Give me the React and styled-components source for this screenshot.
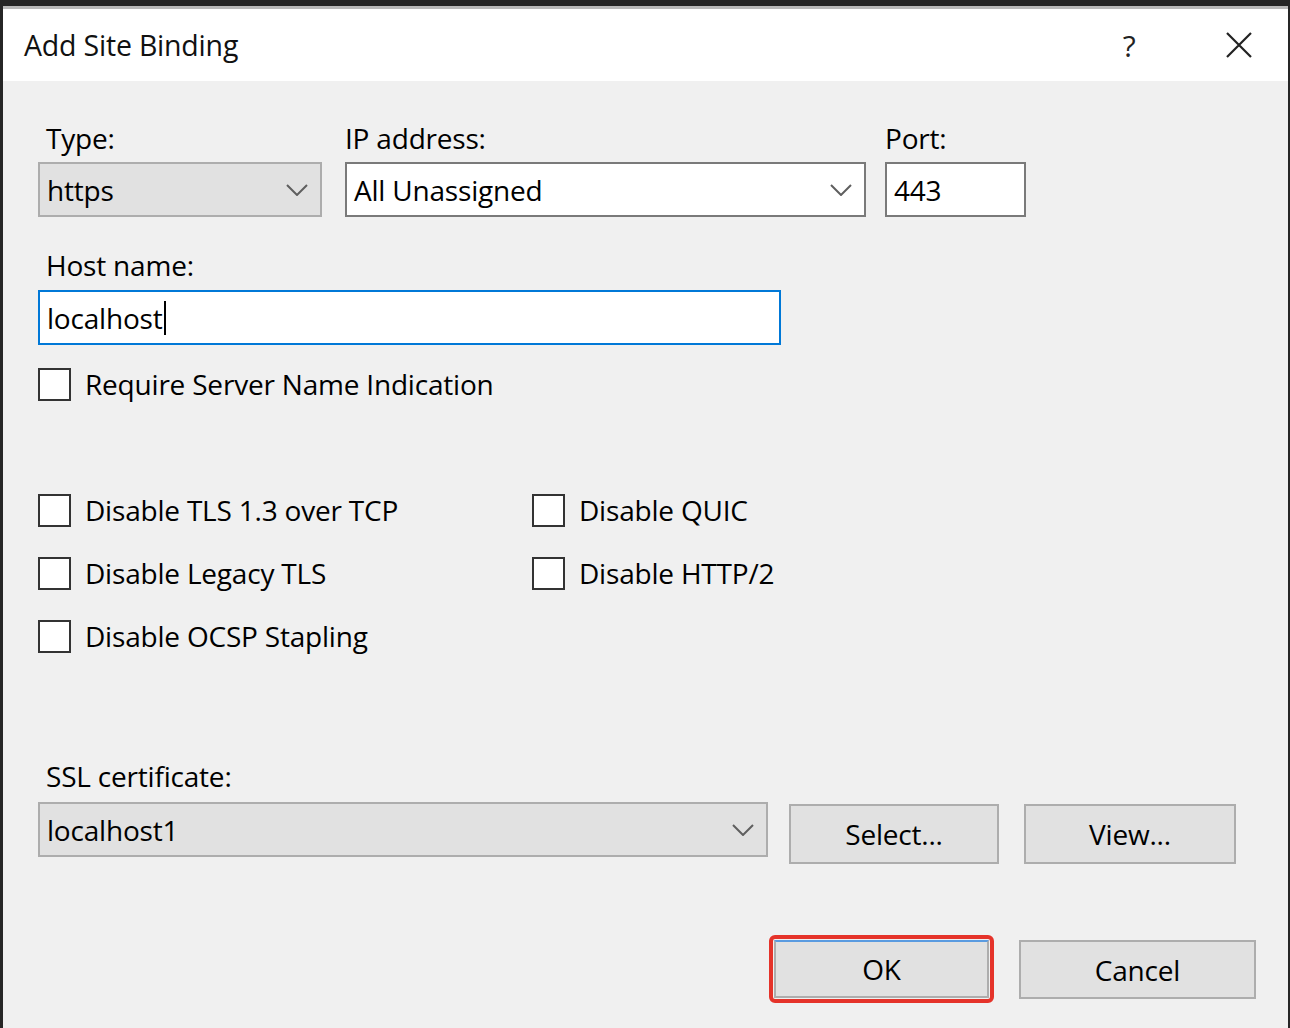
import React from 'react';
import styled, { createGlobalStyle } from 'styled-components';

const Global = createGlobalStyle`
  html, body { margin: 0; padding: 0; background: #262626; }
  body { font-family: "Open Sans", "Noto Sans", sans-serif; }
`;

const Screen = styled.div`
  width: 1290px;
  height: 1028px;
  padding: 6px 2px 0 3px;
  box-sizing: border-box;
  overflow: hidden;
`;

const Window = styled.div`
  height: 100%;
  display: flex;
  flex-direction: column;
  background: #f0f0f0;
  border-top: 3px solid #b9b9b9;
  font-size: 28px;
  letter-spacing: -0.2px;
  color: #000;
`;

const TitleBar = styled.div`
  height: 72px;
  flex: none;
  background: #fff;
  display: flex;
  align-items: center;
  padding: 0 36px 0 21px;
`;

const Title = styled.div`
  flex: 1;
  font-size: 28.5px;
  color: #111;
`;

const TitleIcon = styled.div`
  width: 26px;
  height: 28px;
  display: flex;
  align-items: center;
  justify-content: center;
  margin-left: ${p => p.gap || 0}px;
  font-size: 30px;
  color: #222;
`;

const Body = styled.div`
  flex: 1;
  display: flex;
  flex-direction: column;
  padding: 39px 32px 0 35px;
`;

const TopGrid = styled.div`
  display: flex;
  & > div:nth-child(2) { margin-left: 23px; }
  & > div:nth-child(3) { margin-left: 19px; }
`;

const Field = styled.div`
  display: flex;
  flex-direction: column;
  width: ${p => p.w ? p.w + 'px' : 'auto'};
  margin-top: ${p => p.top || 0}px;
`;

const Label = styled.div`
  height: 36px;
  line-height: 36px;
  padding-left: ${p => p.indent ?? 8}px;
  margin-bottom: ${p => p.after || 6}px;
  white-space: nowrap;
`;

const Box = styled.div`
  box-sizing: border-box;
  height: ${p => p.h || 55}px;
  width: ${p => p.w ? p.w + 'px' : '100%'};
  display: flex;
  align-items: center;
  padding: 0 12px 0 7px;
  background: ${p => (p.$gray ? '#e1e1e1' : '#fff')};
  border: 2px solid ${p => (p.$blue ? '#0078d7' : p.$gray ? '#adadad' : '#7a7a7a')};
  white-space: nowrap;
`;

const BoxText = styled.span`
  flex: 1;
  display: flex;
  align-items: center;
`;

const Caret = styled.span`
  display: inline-block;
  width: 2px;
  height: 34px;
  background: #000;
  margin-left: 1px;
`;

const Chevron = () => (
  <svg width="22" height="12" viewBox="0 0 22 12" fill="none">
    <path d="M1 1 L11 11 L21 1" stroke="#5f5f5f" strokeWidth="2" />
  </svg>
);

const CheckRow = styled.label`
  display: flex;
  align-items: center;
  height: 36px;
  white-space: nowrap;
  margin-top: ${p => p.top || 0}px;
`;

const CheckBox = styled.span`
  box-sizing: border-box;
  width: 33px;
  height: 33px;
  border: 2px solid #333;
  background: #fff;
  margin-right: 14px;
  flex: none;
`;

const OptionsGrid = styled.div`
  display: grid;
  grid-template-columns: 494px auto;
  row-gap: 27px;
  margin-top: 90px;
`;

const CertRow = styled.div`
  display: flex;
  align-items: flex-start;
`;

const Button = styled.div`
  box-sizing: border-box;
  width: ${p => p.w}px;
  height: ${p => p.h || 60}px;
  margin-left: ${p => p.gap || 0}px;
  margin-top: ${p => p.top || 0}px;
  display: flex;
  align-items: center;
  justify-content: center;
  background: #e1e1e1;
  border: 2px solid #adadad;
  border-top-color: ${p => (p.$default ? '#5a9be0' : '#adadad')};
  outline: ${p => (p.$marked ? '4px solid #e5332a' : 'none')};
  outline-offset: 1px;
  border-radius: ${p => (p.$marked ? '1px' : '0')};
`;

const Footer = styled.div`
  display: flex;
  justify-content: flex-end;
  margin-top: 76px;
`;

export default function App() {
  return (
    <Screen>
      <Global />
      <Window>
        <TitleBar>
          <Title>Add Site Binding</Title>
          <TitleIcon>?</TitleIcon>
          <TitleIcon gap={84}>
            <svg width="26" height="26" viewBox="0 0 26 26">
              <path d="M1 1 L25 25 M25 1 L1 25" stroke="#222" strokeWidth="2.2" />
            </svg>
          </TitleIcon>
        </TitleBar>
        <Body>
          <TopGrid>
            <Field w={284}>
              <Label>Type:</Label>
              <Box $gray>
                <BoxText>https</BoxText>
                <Chevron />
              </Box>
            </Field>
            <Field w={521}>
              <Label indent={0}>IP address:</Label>
              <Box>
                <BoxText>All Unassigned</BoxText>
                <Chevron />
              </Box>
            </Field>
            <Field w={141}>
              <Label indent={0}>Port:</Label>
              <Box>
                <BoxText>443</BoxText>
              </Box>
            </Field>
          </TopGrid>

          <Field top={30}>
            <Label after={7}>Host name:</Label>
            <Box $blue w={743}>
              <BoxText>localhost<Caret /></BoxText>
            </Box>
          </Field>

          <CheckRow top={21}>
            <CheckBox />
            Require Server Name Indication
          </CheckRow>

          <OptionsGrid>
            <CheckRow><CheckBox />Disable TLS 1.3 over TCP</CheckRow>
            <CheckRow><CheckBox />Disable QUIC</CheckRow>
            <CheckRow><CheckBox />Disable Legacy TLS</CheckRow>
            <CheckRow><CheckBox />Disable HTTP/2</CheckRow>
            <CheckRow><CheckBox />Disable OCSP Stapling</CheckRow>
          </OptionsGrid>

          <Field top={104}>
            <Label after={8}>SSL certificate:</Label>
            <CertRow>
              <Box $gray w={730}>
                <BoxText>localhost1</BoxText>
                <Chevron />
              </Box>
              <Button w={210} gap={21} top={2}>Select...</Button>
              <Button w={212} gap={25} top={2}>View...</Button>
            </CertRow>
          </Field>

          <Footer>
            <Button w={215} h={58} $default $marked>OK</Button>
            <Button w={237} h={59} gap={30}>Cancel</Button>
          </Footer>
        </Body>
      </Window>
    </Screen>
  );
}
